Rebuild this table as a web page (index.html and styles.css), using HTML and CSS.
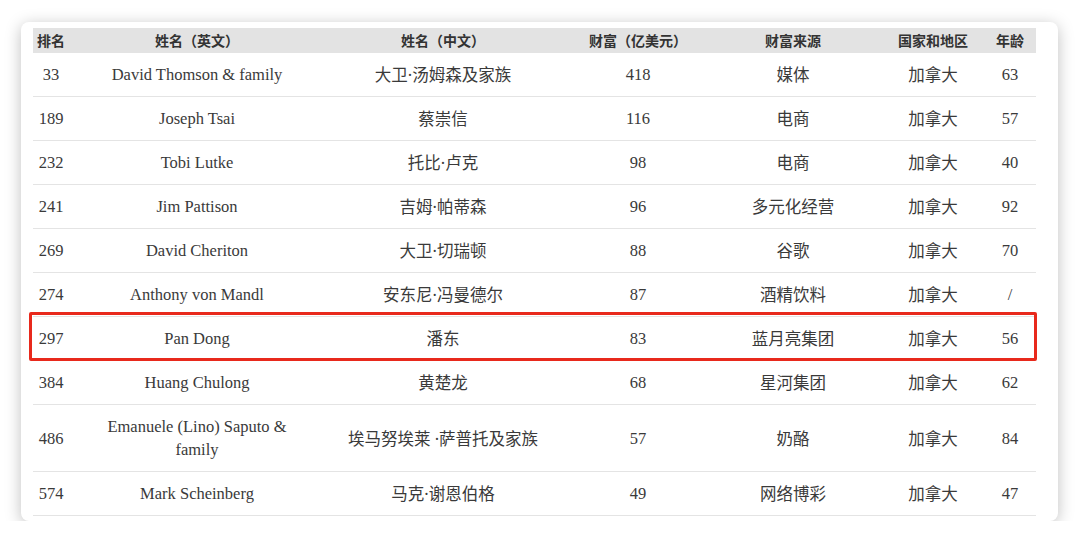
FILE: index.html
```html
<!DOCTYPE html>
<html lang="zh">
<head>
<meta charset="utf-8">
<link rel="stylesheet" href="styles.css">
</head>
<body>
<div class="card">
  <table class="rank">
    <colgroup>
      <col class="c1"><col class="c2"><col class="c3"><col class="c4"><col class="c5"><col class="c6"><col class="c7">
    </colgroup>
    <thead>
      <tr><th>排名</th><th>姓名（英文）</th><th>姓名（中文）</th><th>财富（亿美元）</th><th>财富来源</th><th>国家和地区</th><th>年龄</th></tr>
    </thead>
    <tbody>
      <tr><td>33</td><td>David Thomson &amp; family</td><td>大卫·汤姆森及家族</td><td>418</td><td>媒体</td><td>加拿大</td><td>63</td></tr>
      <tr><td>189</td><td>Joseph Tsai</td><td>蔡崇信</td><td>116</td><td>电商</td><td>加拿大</td><td>57</td></tr>
      <tr><td>232</td><td>Tobi Lutke</td><td>托比·卢克</td><td>98</td><td>电商</td><td>加拿大</td><td>40</td></tr>
      <tr><td>241</td><td>Jim Pattison</td><td>吉姆·帕蒂森</td><td>96</td><td>多元化经营</td><td>加拿大</td><td>92</td></tr>
      <tr><td>269</td><td>David Cheriton</td><td>大卫·切瑞顿</td><td>88</td><td>谷歌</td><td>加拿大</td><td>70</td></tr>
      <tr><td>274</td><td>Anthony von Mandl</td><td>安东尼·冯曼德尔</td><td>87</td><td>酒精饮料</td><td>加拿大</td><td>/</td></tr>
      <tr><td>297</td><td>Pan Dong</td><td>潘东</td><td>83</td><td>蓝月亮集团</td><td>加拿大</td><td>56</td></tr>
      <tr><td>384</td><td>Huang Chulong</td><td>黄楚龙</td><td>68</td><td>星河集团</td><td>加拿大</td><td>62</td></tr>
      <tr><td>486</td><td>Emanuele (Lino) Saputo &amp; family</td><td>埃马努埃莱 ·萨普托及家族</td><td>57</td><td>奶酪</td><td>加拿大</td><td>84</td></tr>
      <tr><td>574</td><td>Mark Scheinberg</td><td>马克·谢恩伯格</td><td>49</td><td>网络博彩</td><td>加拿大</td><td>47</td></tr>
    </tbody>
  </table>
  <div class="highlight"></div>
</div>
</body>
</html>
```

FILE: styles.css
```css
html, body {
  margin: 0;
  padding: 0;
  background: #ffffff;
}

.card {
  position: relative;
  margin: 22px 0 0 21px;
  width: 1037px;
  height: 499px;
  box-sizing: border-box;
  padding: 6px 0 0 12px;
  background: #ffffff;
  border-radius: 8px;
  box-shadow: 0 3px 16px rgba(0, 0, 0, 0.25);
}

.rank {
  width: 1003px;
  border-collapse: collapse;
  table-layout: fixed;
  color: #3a3a3a;
  font-family: "Liberation Serif", "Noto Sans CJK SC", serif;
  font-size: 16.5px;
}

.c1 { width: 36px; }
.c2 { width: 256px; }
.c3 { width: 236px; }
.c4 { width: 154px; }
.c5 { width: 156px; }
.c6 { width: 124px; }
.c7 { width: 41px; }

.rank th {
  height: 25px;
  padding: 0;
  background: #e3e3e3;
  font-family: "Noto Sans CJK SC", sans-serif;
  font-size: 14px;
  font-weight: 700;
  color: #333333;
  text-align: center;
  line-height: 25px;
}

.rank td {
  padding: 10px 24px 10px;
  line-height: 23px;
  text-align: center;
  border-bottom: 1px solid #e4e4e4;
}

.rank td:first-child,
.rank th:first-child {
  padding-left: 0;
  padding-right: 0;
}

.rank td:nth-child(3),
.rank td:nth-child(5),
.rank td:nth-child(6) {
  font-family: "Noto Sans", "Noto Sans CJK SC", sans-serif;
  font-size: 16.5px;
  padding-left: 0;
  padding-right: 0;
}

.rank td:last-child,
.rank th:last-child {
  padding-left: 0;
  padding-right: 11px;
}

.highlight {
  position: absolute;
  left: 8px;
  top: 290px;
  width: 1008px;
  height: 49px;
  box-sizing: border-box;
  border: 3px solid #e8291c;
  border-radius: 2px;
}
```
